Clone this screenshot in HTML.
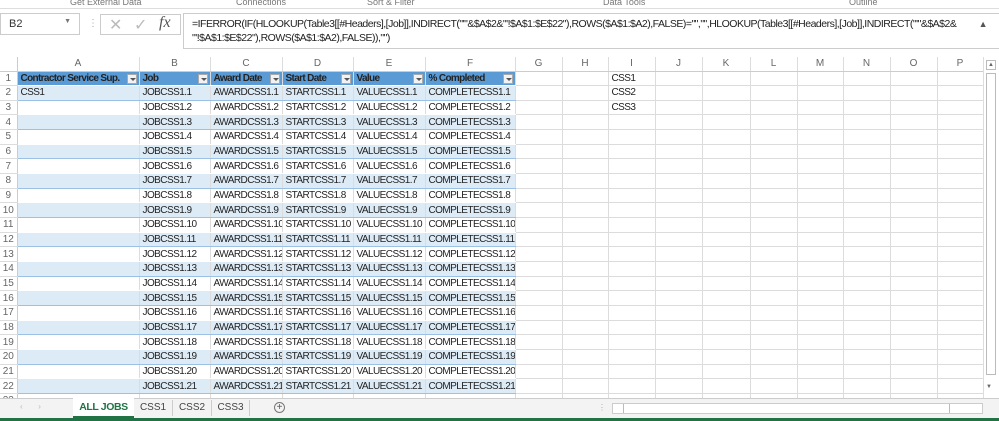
<!DOCTYPE html>
<html><head><meta charset="utf-8"><style>
*{margin:0;padding:0;box-sizing:border-box}
body{width:999px;height:421px;overflow:hidden;background:#fff;font-family:"Liberation Sans",sans-serif;position:relative}
.abs{position:absolute}
.rib{top:0;height:8px;font-size:9px;color:#777;line-height:4px;overflow:hidden}
#grid{position:absolute;left:0;top:57px;border-collapse:collapse;table-layout:fixed;width:983px;font-size:10px;letter-spacing:-0.55px}
#grid td{height:14.67px;border-right:1px solid #dcdcdc;border-bottom:1px solid #dcdcdc;white-space:nowrap;overflow:hidden;padding:0 0 0 3px;line-height:13px;color:#222}
#grid tr.ch td{height:14px;text-align:center;color:#666;padding:0;border-bottom:1px solid #ccc;letter-spacing:0}
#grid td.rh{text-align:center;color:#666;padding:0;border-right:1px solid #ccc;background:#fff;letter-spacing:0}
tr.h td.t{background:#5b9bd5;color:#fff;font-weight:bold;position:relative;border-right-color:#5b9bd5;letter-spacing:-0.65px}
tr.b td.t{background:#ddebf7}
td.t{border-bottom-color:#fff!important}
tr.b td.t{border-bottom-color:#9bc2e6!important}
.fb{position:absolute;right:2px;top:2px;width:10px;height:10px;background:#f2f2f2;border:1px solid #aaa}
.fb:after{content:"";position:absolute;left:2px;top:3px;border-left:3px solid transparent;border-right:3px solid transparent;border-top:3px solid #555}
</style></head><body>
<div class="abs rib" style="left:70px">Get External Data</div>
<div class="abs rib" style="left:236px">Connections</div>
<div class="abs rib" style="left:367px">Sort &amp; Filter</div>
<div class="abs rib" style="left:603px">Data Tools</div>
<div class="abs rib" style="left:849px">Outline</div>
<div class="abs" style="left:0;top:8px;width:999px;height:1px;background:#ddd"></div>
<div class="abs" style="left:0;top:13px;width:80px;height:22px;border:1px solid #ccc;font-size:11px;padding:4px 0 0 8px;color:#333">B2<span style="position:absolute;right:8px;top:4px;font-size:7px;color:#777">▼</span></div>
<div class="abs" style="left:88px;top:18px;font-size:10px;color:#aaa">⋮</div>
<div class="abs" style="left:100px;top:14px;width:81px;height:21px;border:1px solid #ccc;color:#bbb;font-size:16px">
<span style="position:absolute;left:8px;top:0">✕</span><span style="position:absolute;left:33px;top:0">✓</span><span style="position:absolute;left:58px;top:-1px;font-family:'Liberation Serif',serif;font-style:italic;color:#555;font-size:16px">fx</span></div>
<div class="abs" style="left:183px;top:13px;width:816px;height:36px;border:1px solid #ccc;border-right:none;font-size:10.5px;letter-spacing:-0.5px;line-height:14px;padding:3px 0 0 8px;color:#222;white-space:nowrap;overflow:hidden">=IFERROR(IF(HLOOKUP(Table3[[#Headers],[Job]],INDIRECT("'"&amp;$A$2&amp;"'!$A$1:$E$22"),ROWS($A$1:$A2),FALSE)="","",HLOOKUP(Table3[[#Headers],[Job]],INDIRECT("'"&amp;$A$2&amp;<br>"'!$A$1:$E$22"),ROWS($A$1:$A2),FALSE)),"")<span style="position:absolute;right:12px;top:3px;font-size:9px;color:#555;background:#fff">▲</span></div>
<table id="grid">
<colgroup><col style="width:17px"><col style="width:122px"><col style="width:71px"><col style="width:72px"><col style="width:71px"><col style="width:72px"><col style="width:90px"><col style="width:47px"><col style="width:46px"><col style="width:47px"><col style="width:47px"><col style="width:48px"><col style="width:47px"><col style="width:46px"><col style="width:47px"><col style="width:47px"><col style="width:46px"></colgroup>
<tr class="ch"><td class="rh"></td><td>A</td><td>B</td><td>C</td><td>D</td><td>E</td><td>F</td><td>G</td><td>H</td><td>I</td><td>J</td><td>K</td><td>L</td><td>M</td><td>N</td><td>O</td><td>P</td></tr>
<tr class="h"><td class="rh">1</td><td class="t">Contractor Service Sup.<span class="fb"></span></td><td class="t">Job<span class="fb"></span></td><td class="t">Award Date<span class="fb"></span></td><td class="t">Start Date<span class="fb"></span></td><td class="t">Value<span class="fb"></span></td><td class="t">% Completed<span class="fb"></span></td><td></td><td></td><td>CSS1</td><td></td><td></td><td></td><td></td><td></td><td></td><td></td></tr>
<tr class="b"><td class="rh">2</td><td class="t">CSS1</td><td class="t">JOBCSS1.1</td><td class="t">AWARDCSS1.1</td><td class="t">STARTCSS1.1</td><td class="t">VALUECSS1.1</td><td class="t">COMPLETECSS1.1</td><td></td><td></td><td>CSS2</td><td></td><td></td><td></td><td></td><td></td><td></td><td></td></tr>
<tr><td class="rh">3</td><td class="t"></td><td class="t">JOBCSS1.2</td><td class="t">AWARDCSS1.2</td><td class="t">STARTCSS1.2</td><td class="t">VALUECSS1.2</td><td class="t">COMPLETECSS1.2</td><td></td><td></td><td>CSS3</td><td></td><td></td><td></td><td></td><td></td><td></td><td></td></tr>
<tr class="b"><td class="rh">4</td><td class="t"></td><td class="t">JOBCSS1.3</td><td class="t">AWARDCSS1.3</td><td class="t">STARTCSS1.3</td><td class="t">VALUECSS1.3</td><td class="t">COMPLETECSS1.3</td><td></td><td></td><td></td><td></td><td></td><td></td><td></td><td></td><td></td><td></td></tr>
<tr><td class="rh">5</td><td class="t"></td><td class="t">JOBCSS1.4</td><td class="t">AWARDCSS1.4</td><td class="t">STARTCSS1.4</td><td class="t">VALUECSS1.4</td><td class="t">COMPLETECSS1.4</td><td></td><td></td><td></td><td></td><td></td><td></td><td></td><td></td><td></td><td></td></tr>
<tr class="b"><td class="rh">6</td><td class="t"></td><td class="t">JOBCSS1.5</td><td class="t">AWARDCSS1.5</td><td class="t">STARTCSS1.5</td><td class="t">VALUECSS1.5</td><td class="t">COMPLETECSS1.5</td><td></td><td></td><td></td><td></td><td></td><td></td><td></td><td></td><td></td><td></td></tr>
<tr><td class="rh">7</td><td class="t"></td><td class="t">JOBCSS1.6</td><td class="t">AWARDCSS1.6</td><td class="t">STARTCSS1.6</td><td class="t">VALUECSS1.6</td><td class="t">COMPLETECSS1.6</td><td></td><td></td><td></td><td></td><td></td><td></td><td></td><td></td><td></td><td></td></tr>
<tr class="b"><td class="rh">8</td><td class="t"></td><td class="t">JOBCSS1.7</td><td class="t">AWARDCSS1.7</td><td class="t">STARTCSS1.7</td><td class="t">VALUECSS1.7</td><td class="t">COMPLETECSS1.7</td><td></td><td></td><td></td><td></td><td></td><td></td><td></td><td></td><td></td><td></td></tr>
<tr><td class="rh">9</td><td class="t"></td><td class="t">JOBCSS1.8</td><td class="t">AWARDCSS1.8</td><td class="t">STARTCSS1.8</td><td class="t">VALUECSS1.8</td><td class="t">COMPLETECSS1.8</td><td></td><td></td><td></td><td></td><td></td><td></td><td></td><td></td><td></td><td></td></tr>
<tr class="b"><td class="rh">10</td><td class="t"></td><td class="t">JOBCSS1.9</td><td class="t">AWARDCSS1.9</td><td class="t">STARTCSS1.9</td><td class="t">VALUECSS1.9</td><td class="t">COMPLETECSS1.9</td><td></td><td></td><td></td><td></td><td></td><td></td><td></td><td></td><td></td><td></td></tr>
<tr><td class="rh">11</td><td class="t"></td><td class="t">JOBCSS1.10</td><td class="t">AWARDCSS1.10</td><td class="t">STARTCSS1.10</td><td class="t">VALUECSS1.10</td><td class="t">COMPLETECSS1.10</td><td></td><td></td><td></td><td></td><td></td><td></td><td></td><td></td><td></td><td></td></tr>
<tr class="b"><td class="rh">12</td><td class="t"></td><td class="t">JOBCSS1.11</td><td class="t">AWARDCSS1.11</td><td class="t">STARTCSS1.11</td><td class="t">VALUECSS1.11</td><td class="t">COMPLETECSS1.11</td><td></td><td></td><td></td><td></td><td></td><td></td><td></td><td></td><td></td><td></td></tr>
<tr><td class="rh">13</td><td class="t"></td><td class="t">JOBCSS1.12</td><td class="t">AWARDCSS1.12</td><td class="t">STARTCSS1.12</td><td class="t">VALUECSS1.12</td><td class="t">COMPLETECSS1.12</td><td></td><td></td><td></td><td></td><td></td><td></td><td></td><td></td><td></td><td></td></tr>
<tr class="b"><td class="rh">14</td><td class="t"></td><td class="t">JOBCSS1.13</td><td class="t">AWARDCSS1.13</td><td class="t">STARTCSS1.13</td><td class="t">VALUECSS1.13</td><td class="t">COMPLETECSS1.13</td><td></td><td></td><td></td><td></td><td></td><td></td><td></td><td></td><td></td><td></td></tr>
<tr><td class="rh">15</td><td class="t"></td><td class="t">JOBCSS1.14</td><td class="t">AWARDCSS1.14</td><td class="t">STARTCSS1.14</td><td class="t">VALUECSS1.14</td><td class="t">COMPLETECSS1.14</td><td></td><td></td><td></td><td></td><td></td><td></td><td></td><td></td><td></td><td></td></tr>
<tr class="b"><td class="rh">16</td><td class="t"></td><td class="t">JOBCSS1.15</td><td class="t">AWARDCSS1.15</td><td class="t">STARTCSS1.15</td><td class="t">VALUECSS1.15</td><td class="t">COMPLETECSS1.15</td><td></td><td></td><td></td><td></td><td></td><td></td><td></td><td></td><td></td><td></td></tr>
<tr><td class="rh">17</td><td class="t"></td><td class="t">JOBCSS1.16</td><td class="t">AWARDCSS1.16</td><td class="t">STARTCSS1.16</td><td class="t">VALUECSS1.16</td><td class="t">COMPLETECSS1.16</td><td></td><td></td><td></td><td></td><td></td><td></td><td></td><td></td><td></td><td></td></tr>
<tr class="b"><td class="rh">18</td><td class="t"></td><td class="t">JOBCSS1.17</td><td class="t">AWARDCSS1.17</td><td class="t">STARTCSS1.17</td><td class="t">VALUECSS1.17</td><td class="t">COMPLETECSS1.17</td><td></td><td></td><td></td><td></td><td></td><td></td><td></td><td></td><td></td><td></td></tr>
<tr><td class="rh">19</td><td class="t"></td><td class="t">JOBCSS1.18</td><td class="t">AWARDCSS1.18</td><td class="t">STARTCSS1.18</td><td class="t">VALUECSS1.18</td><td class="t">COMPLETECSS1.18</td><td></td><td></td><td></td><td></td><td></td><td></td><td></td><td></td><td></td><td></td></tr>
<tr class="b"><td class="rh">20</td><td class="t"></td><td class="t">JOBCSS1.19</td><td class="t">AWARDCSS1.19</td><td class="t">STARTCSS1.19</td><td class="t">VALUECSS1.19</td><td class="t">COMPLETECSS1.19</td><td></td><td></td><td></td><td></td><td></td><td></td><td></td><td></td><td></td><td></td></tr>
<tr><td class="rh">21</td><td class="t"></td><td class="t">JOBCSS1.20</td><td class="t">AWARDCSS1.20</td><td class="t">STARTCSS1.20</td><td class="t">VALUECSS1.20</td><td class="t">COMPLETECSS1.20</td><td></td><td></td><td></td><td></td><td></td><td></td><td></td><td></td><td></td><td></td></tr>
<tr class="b"><td class="rh">22</td><td class="t"></td><td class="t">JOBCSS1.21</td><td class="t">AWARDCSS1.21</td><td class="t">STARTCSS1.21</td><td class="t">VALUECSS1.21</td><td class="t">COMPLETECSS1.21</td><td></td><td></td><td></td><td></td><td></td><td></td><td></td><td></td><td></td><td></td></tr>
<tr><td class="rh">23</td><td></td><td></td><td></td><td></td><td></td><td></td><td></td><td></td><td></td><td></td><td></td><td></td><td></td><td></td><td></td><td></td></tr>
</table>
<div class="abs" style="left:983px;top:57px;width:16px;height:341px;background:#fff;border-left:1px solid #ddd"></div>
<div class="abs" style="left:986px;top:60px;width:10px;height:10px;border:1px solid #bbb;background:#fff;font-size:6px;text-align:center;line-height:8px;color:#666">▲</div>
<div class="abs" style="left:986px;top:73px;width:10px;height:302px;border:1px solid #bbb;background:#fff"></div>
<div class="abs" style="left:986px;top:384px;font-size:6px;color:#666">▼</div>
<div class="abs" style="left:0;top:398px;width:999px;height:20px;background:#f3f3f3;border-top:1px solid #ccc"></div>
<div class="abs" style="left:20px;top:402px;font-size:8px;color:#bbb">‹&nbsp;&nbsp;&nbsp;&nbsp;&nbsp;&nbsp;&nbsp;›</div>
<div class="abs" style="left:73px;top:397px;width:61px;height:21px;background:#fff;border-bottom:2px solid #217346;font-size:10.5px;font-weight:bold;color:#217346;text-align:center;line-height:20px;letter-spacing:-0.4px">ALL JOBS</div>
<div class="abs" style="left:134px;top:400px;width:39px;height:16px;font-size:10px;color:#444;text-align:center;line-height:16px;border-right:1px solid #ccc">CSS1</div>
<div class="abs" style="left:173px;top:400px;width:39px;height:16px;font-size:10px;color:#444;text-align:center;line-height:16px;border-right:1px solid #ccc">CSS2</div>
<div class="abs" style="left:212px;top:400px;width:38px;height:16px;font-size:10px;color:#444;text-align:center;line-height:16px;border-right:1px solid #ccc">CSS3</div>
<div class="abs" style="left:274px;top:402px;width:11px;height:11px;border:1px solid #777;border-radius:50%;font-size:10px;line-height:9px;text-align:center;color:#555">+</div>
<div class="abs" style="left:598px;top:403px;font-size:8px;color:#aaa">⋮</div>
<div class="abs" style="left:612px;top:403px;width:371px;height:11px;border:1px solid #ccc;background:#fff"></div>
<div class="abs" style="left:623px;top:404px;width:327px;height:9px;border-left:1px solid #bbb;border-right:1px solid #bbb;background:#fff"></div>
<div class="abs" style="left:0;top:418px;width:999px;height:3px;background:#217346"></div>
</body></html>
